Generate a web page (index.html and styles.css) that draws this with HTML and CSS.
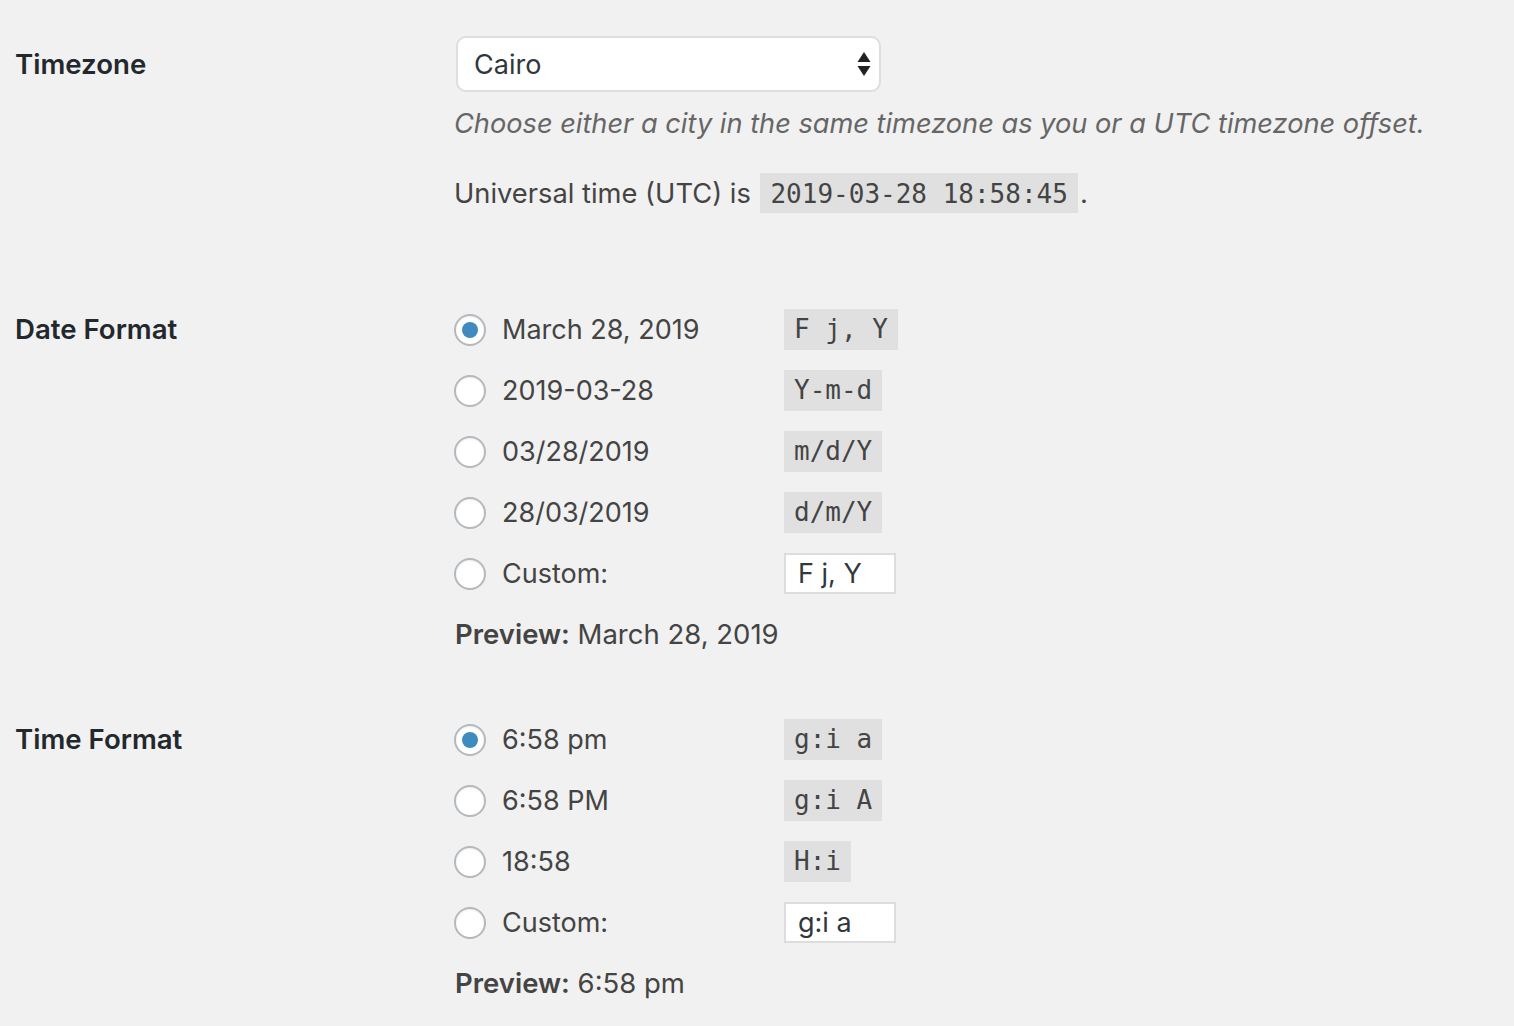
FILE: index.html
```html
<!DOCTYPE html>
<html lang="en">
<head>
    <meta charset="UTF-8">
    <meta name="viewport" content="width=device-width, initial-scale=1.0">
    <title>General Settings</title>
    <link rel="stylesheet" href="styles.css">
</head>
<body>

    <div class="settings">

        <!-- Timezone -->
        <div class="row row-timezone">
            <div class="row-label">Timezone</div>
            <div class="row-field">
                <div class="select">
                    <span>Cairo</span>
                    <svg class="select-arrows" width="14" height="26" viewBox="0 0 14 26">
                        <path d="M7 1 L13.5 11 L0.5 11 Z" fill="#222"/>
                        <path d="M0.5 15 L13.5 15 L7 25 Z" fill="#222"/>
                    </svg>
                </div>
                <p class="description">Choose either a city in the same timezone as you or a UTC timezone offset.</p>
                <p class="utc">Universal time (UTC) is <code>2019-03-28 18:58:45</code>.</p>
            </div>
        </div>

        <!-- Date Format -->
        <div class="row row-date">
            <div class="row-label">Date Format</div>
            <div class="row-field options">
                <label class="option">
                    <span class="radio checked"></span>
                    <span class="option-text">March 28, 2019</span>
                    <code>F j, Y</code>
                </label>
                <label class="option">
                    <span class="radio"></span>
                    <span class="option-text">2019-03-28</span>
                    <code>Y-m-d</code>
                </label>
                <label class="option">
                    <span class="radio"></span>
                    <span class="option-text">03/28/2019</span>
                    <code>m/d/Y</code>
                </label>
                <label class="option">
                    <span class="radio"></span>
                    <span class="option-text">28/03/2019</span>
                    <code>d/m/Y</code>
                </label>
                <label class="option">
                    <span class="radio"></span>
                    <span class="option-text">Custom:</span>
                    <span class="custom-input">F j, Y</span>
                </label>
                <p class="preview"><strong>Preview:</strong> March 28, 2019</p>
            </div>
        </div>

        <!-- Time Format -->
        <div class="row row-time">
            <div class="row-label">Time Format</div>
            <div class="row-field options">
                <label class="option">
                    <span class="radio checked"></span>
                    <span class="option-text">6:58 pm</span>
                    <code>g:i a</code>
                </label>
                <label class="option">
                    <span class="radio"></span>
                    <span class="option-text">6:58 PM</span>
                    <code>g:i A</code>
                </label>
                <label class="option">
                    <span class="radio"></span>
                    <span class="option-text">18:58</span>
                    <code>H:i</code>
                </label>
                <label class="option">
                    <span class="radio"></span>
                    <span class="option-text">Custom:</span>
                    <span class="custom-input">g:i a</span>
                </label>
                <p class="preview"><strong>Preview:</strong> 6:58 pm</p>
            </div>
        </div>

    </div>

</body>
</html>
```

FILE: styles.css
```css
/* Page */
body {
    margin: 0;
    background-color: #f1f1f1;
    font-family: Inter, "Noto Sans", sans-serif;
    color: #444;
}

.settings {
    padding: 36px 15px 0 15px;
}

/* Rows: label column + field column */
.row {
    display: grid;
    grid-template-columns: 439px 1fr;
}

.row-date {
    margin-top: 95px;
}

.row-time {
    margin-top: 64px;
}

.row-label {
    font-size: 27.6px;
    font-weight: 600;
    color: #23282d;
    line-height: 41px;
}

.row-timezone .row-label {
    line-height: 56px;
}

p {
    margin: 0;
}

/* Fake select box */
.select {
    display: flex;
    align-items: center;
    justify-content: space-between;
    box-sizing: border-box;
    width: 425px;
    height: 56px;
    margin-left: 2px;
    padding: 0 8px 0 16px;
    background-color: #fff;
    border: 2px solid #dedede;
    border-radius: 10px;
    font-size: 27px;
    color: #32373c;
}

.description {
    margin-top: 12px;
    line-height: 40px;
    font-size: 27.2px;
    font-style: italic;
    color: #666;
}

.utc {
    margin-top: 30px;
    line-height: 40px;
    font-size: 27.3px;
}

code {
    font-family: "DejaVu Sans Mono", monospace;
    font-size: 26px;
    padding: 6px 10px 4px 10px;
    margin: 0 2px;
    background-color: #e0e0e0;
    color: #444;
}

/* Radio options */
.options {
    display: flex;
    flex-direction: column;
    gap: 20px;
}

.option {
    display: flex;
    align-items: center;
    height: 41px;
    font-size: 27px;
}

.radio {
    box-sizing: border-box;
    width: 32px;
    height: 32px;
    border: 2px solid #b4b9be;
    border-radius: 50%;
    background-color: #fff;
    display: flex;
    align-items: center;
    justify-content: center;
    box-shadow: inset 0 1px 2px rgba(0, 0, 0, 0.07);
}

.radio.checked::before {
    content: "";
    width: 16px;
    height: 16px;
    border-radius: 50%;
    background-color: #3f8bc0;
}

.option-text {
    width: 282px;
    margin-left: 16px;
}

.option code {
    margin: 0;
    line-height: 41px;
    padding: 0 10px;
}

.custom-input {
    box-sizing: border-box;
    width: 112px;
    height: 41px;
    line-height: 37px;
    padding: 0 12px;
    background-color: #fff;
    border: 2px solid #dddddd;
    color: #32373c;
    font-size: 27px;
}

.preview {
    line-height: 41px;
    font-size: 27.5px;
    margin-left: 1px;
}

.preview strong {
    font-weight: 600;
}
```
